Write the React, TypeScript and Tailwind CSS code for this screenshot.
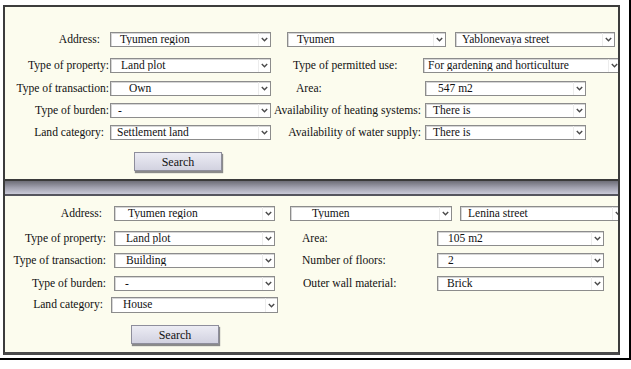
import React from 'react';

const serif = { fontFamily: '"Liberation Serif", "Times New Roman", serif' };

function Select({ value, w, pl, h = 'h-[15px]' }: { value: string; w: string; pl: string; h?: string }) {
  return (
    <div className={`${w} ${h} shrink-0 flex items-center bg-white border border-[#8c8c8c] shadow-[inset_1px_1px_0_#d6d6d6]`}>
      <span className={`flex-1 ${pl} text-[11.5px] leading-none text-[#111] whitespace-nowrap overflow-hidden`}>{value}</span>
      <span className="w-[12px] h-full flex items-center justify-center border-l border-[#ececec]">
        <svg width="7" height="5" viewBox="0 0 7 5">
          <path d="M0.8 1 L3.5 3.8 L6.2 1" fill="none" stroke="#4a4a4a" strokeWidth="1.4" />
        </svg>
      </span>
    </div>
  );
}

function Label({ text, w, align = 'text-right', pad = '' }: { text: string; w: string; align?: string; pad?: string }) {
  return (
    <div className={`${w} ${align} ${pad} shrink-0 text-[11.6px] leading-none text-[#111] whitespace-nowrap`}>{text}</div>
  );
}

function SearchButton({ ml }: { ml: string }) {
  return (
    <div
      className={`${ml} w-[88px] h-[19px] flex items-center justify-center text-[12px] text-[#111] bg-linear-to-b from-[#ececf4] to-[#d2d2e0] border border-[#8e8e9c] shadow-[1px_2px_1px_#8a8a8a]`}
    >
      Search
    </div>
  );
}

export default function App() {
  return (
    <div className="w-[631px] h-[369px] bg-white" style={serif}>
      <div className="w-[631px] h-[360px] border-r-2 border-b-2 border-black pt-[5px] pl-[3px]">
        {/* Top panel */}
        <div className="w-[617px] h-[174px] border-x-2 border-t-2 border-[#3c3c3c] bg-[#fcfcee] overflow-hidden">
          <div className="flex items-center mt-[25px]">
            <Label text="Address:" w="w-[105px]" pad="pr-[10px]" />
            <Select value="Tyumen region" w="w-[161px]" pl="pl-[9px]" />
            <div className="ml-[16px]">
              <Select value="Tyumen" w="w-[159px]" pl="pl-[9px]" />
            </div>
            <div className="ml-[9px]">
              <Select value="Yablonevaya street" w="w-[160px]" pl="pl-[6px]" />
            </div>
          </div>
          <div className="flex items-center mt-[11px]">
            <Label text="Type of property:" w="w-[105px]" pad="pr-[1px]" />
            <Select value="Land plot" w="w-[161px]" pl="pl-[10px]" />
            <Label text="Type of permitted use:" w="w-[152px]" align="text-left" pad="pl-[22px]" />
            <Select value="For gardening and horticulture" w="w-[198px]" pl="pl-[4px]" />
          </div>
          <div className="flex items-center mt-[8px]">
            <Label text="Type of transaction:" w="w-[105px]" pad="pr-[1px]" />
            <Select value="Own" w="w-[161px]" pl="pl-[18px]" />
            <Label text="Area:" w="w-[154px]" align="text-left" pad="pl-[25px]" />
            <Select value="547 m2" w="w-[161px]" pl="pl-[12px]" />
          </div>
          <div className="flex items-center mt-[7px]">
            <Label text="Type of burden:" w="w-[105px]" pad="pr-[1px]" />
            <Select value="-" w="w-[161px]" pl="pl-[7px]" />
            <Label text="Availability of heating systems:" w="w-[154px]" pad="pr-[4px]" />
            <Select value="There is" w="w-[161px]" pl="pl-[7px]" />
          </div>
          <div className="flex items-center mt-[7px]">
            <Label text="Land category:" w="w-[105px]" pad="pr-[6px]" />
            <Select value="Settlement land" w="w-[161px]" pl="pl-[6px]" />
            <Label text="Availability of water supply:" w="w-[154px]" pad="pr-[4px]" />
            <Select value="There is" w="w-[161px]" pl="pl-[7px]" />
          </div>
          <div className="flex mt-[12px]">
            <SearchButton ml="ml-[129px]" />
          </div>
        </div>

        {/* Divider bar */}
        <div className="w-[617px] h-[17px] flex flex-col border-x-2 border-[#3c3c3c]">
          <div className="h-[2px] bg-[#3a3a3a]" />
          <div className="h-[13px] bg-linear-to-b from-[#6e6e78] via-[#a0a0ae] to-[#cacad8]" />
          <div className="h-[2px] bg-[#55555e]" />
        </div>

        {/* Bottom panel */}
        <div className="w-[617px] h-[159px] border-x-2 border-b-[3px] border-x-[#3c3c3c] border-b-[#4a4a4a] bg-[#fcfcee] overflow-hidden">
          <div className="flex items-center mt-[10px]">
            <Label text="Address:" w="w-[109px]" pad="pr-[12px]" />
            <Select value="Tyumen region" w="w-[161px]" pl="pl-[13px]" />
            <div className="ml-[15px]">
              <Select value="Tyumen" w="w-[162px]" pl="pl-[21px]" />
            </div>
            <div className="ml-[8px]">
              <Select value="Lenina street" w="w-[165px]" pl="pl-[7px]" />
            </div>
          </div>
          <div className="flex items-center mt-[10px]">
            <Label text="Type of property:" w="w-[109px]" pad="pr-[8px]" />
            <Select value="Land plot" w="w-[161px]" pl="pl-[11px]" />
            <Label text="Area:" w="w-[162px]" align="text-left" pad="pl-[27px]" />
            <Select value="105 m2" w="w-[167px]" pl="pl-[10px]" />
          </div>
          <div className="flex items-center mt-[7px]">
            <Label text="Type of transaction:" w="w-[109px]" pad="pr-[8px]" />
            <Select value="Building" w="w-[161px]" pl="pl-[11px]" />
            <Label text="Number of floors:" w="w-[162px]" align="text-left" pad="pl-[27px]" />
            <Select value="2" w="w-[167px]" pl="pl-[10px]" />
          </div>
          <div className="flex items-center mt-[8px]">
            <Label text="Type of burden:" w="w-[109px]" pad="pr-[8px]" />
            <Select value="-" w="w-[161px]" pl="pl-[10px]" />
            <Label text="Outer wall material:" w="w-[162px]" align="text-left" pad="pl-[28px]" />
            <Select value="Brick" w="w-[167px]" pl="pl-[9px]" />
          </div>
          <div className="flex items-center mt-[6px]">
            <Label text="Land category:" w="w-[106px]" pad="pr-[8px]" />
            <Select value="House" w="w-[167px]" pl="pl-[11px]" h="h-[16px]" />
          </div>
          <div className="flex mt-[12px]">
            <SearchButton ml="ml-[126px]" />
          </div>
        </div>
      </div>
    </div>
  );
}
